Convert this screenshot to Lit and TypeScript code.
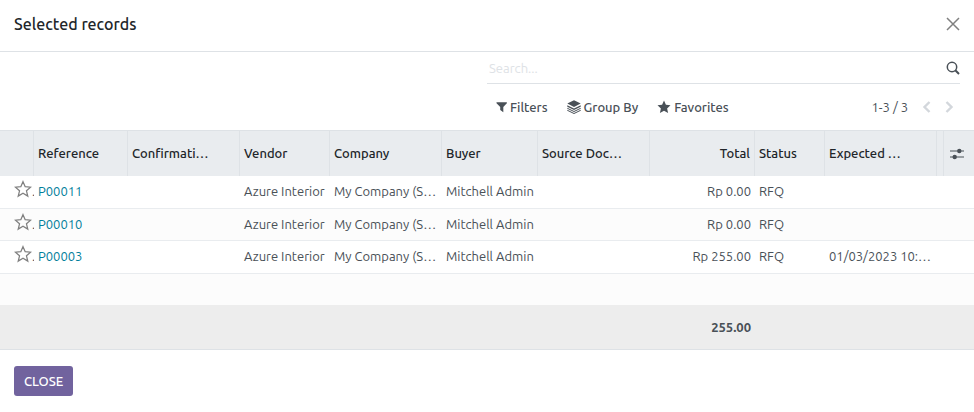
import { LitElement, html, svg, css, nothing } from "lit";
import { customElement, property, state } from "lit/decorators.js";
import { classMap } from "lit/directives/class-map.js";

interface Column {
  key: string;
  label: string;
  cls: string;
  numeric?: boolean;
}

interface Order {
  reference: string;
  vendor: string;
  company: string;
  buyer: string;
  total: string;
  status: string;
  expected: string;
}

const COLUMNS: Column[] = [
  { key: "reference", label: "Reference", cls: "c-ref" },
  { key: "confirmation", label: "Confirmati…", cls: "c-wide" },
  { key: "vendor", label: "Vendor", cls: "c-vendor" },
  { key: "company", label: "Company", cls: "c-wide" },
  { key: "buyer", label: "Buyer", cls: "c-buyer" },
  { key: "source", label: "Source Doc…", cls: "c-wide" },
  { key: "total", label: "Total", cls: "c-total", numeric: true },
  { key: "status", label: "Status", cls: "c-status" },
  { key: "expected", label: "Expected …", cls: "c-wide" },
];

const order = (reference: string, total: string, expected = ""): Order => ({
  reference,
  vendor: "Azure Interior",
  company: "My Company (S…",
  buyer: "Mitchell Admin",
  total,
  status: "RFQ",
  expected,
});

const ORDERS: Order[] = [
  order("P00011", "Rp 0.00"),
  order("P00010", "Rp 0.00"),
  order("P00003", "Rp 255.00", "01/03/2023 10:…"),
];

const ICONS = {
  close: svg`<path d="M1 1 13 13M13 1 1 13" fill="none" stroke="currentColor" stroke-width="1.5"/>`,
  search: svg`<circle cx="6" cy="6" r="4.7" fill="none" stroke="currentColor" stroke-width="1.5"/><path d="M9.300 9.300 13 13" stroke="currentColor" stroke-width="2"/>`,
  filter: svg`<path d="M2.200 1.500h11.200c.6 0 .8.7.4 1.100L9.700 7V13.200L6.100 10.400V7L1.800 2.600c-.4-.4-.2-1.100.4-1.100z"/>`,
  layers: svg`<path d="M7 .2 13.700 3.500 7 6.900 .3 3.500z"/><path d="M.3 5.200 7 8.500l6.700-3.300v1.500L7 10 .3 6.700zM.3 7.700 7 11l6.700-3.300v1L7 12 .3 8.700zM.3 9.700 7 13l6.700-3.300v1L7 14 .3 10.700z"/>`,
  star: svg`<path d="M7 .6 8.900 4.800l4.600.5-3.400 3.100 1 4.700L7 10.800l-4.100 2.300 1-4.700L.5 5.300l4.600-.5z"/>`,
  starOutline: svg`<path d="M7 1.300 8.700 5.200l4.200.4-3.200 2.800 1 4.100L7 10.300l-3.700 2.200 1-4.100L1.100 5.600l4.200-.4z" fill="none" stroke="currentColor" stroke-width="1"/>`,
  prev: svg`<path d="M9.500 2 4.500 7l5 5" fill="none" stroke="currentColor" stroke-width="2.400"/>`,
  next: svg`<path d="M4.500 2l5 5-5 5" fill="none" stroke="currentColor" stroke-width="2.400"/>`,
  sliders: svg`<path d="M0 4h14M0 10h14" stroke="currentColor" stroke-width="1.200"/><circle cx="9.300" cy="4" r="2.200"/><circle cx="4.700" cy="10" r="2.200"/>`,
};

@customElement("ui-icon")
export class UiIcon extends LitElement {
  static styles = css`
    :host { display: inline-flex; width: 14px; height: 14px; flex: none; }
    :host([large]) { width: 18px; height: 18px; }
    :host([small]) { width: 12px; height: 12px; }
    .glyph { display: block; width: 100%; height: 100%; fill: currentColor; }
  `;
  @property() name: keyof typeof ICONS = "star";

  render() {
    return html`<svg class="glyph" viewBox="0 0 14 14" aria-hidden="true">${ICONS[this.name]}</svg>`;
  }
}

@customElement("app-root")
export class AppRoot extends LitElement {
  static styles = css`
    :host {
      display: block;
      min-height: 100vh;
      background: #fff;
      color: #495057;
      font: 13px/20px "Ubuntu", "Noto Sans", sans-serif;
    }
    button {
      font: inherit;
      color: inherit;
      background: none;
      border: 0;
      padding: 0;
      cursor: pointer;
    }
    .header {
      display: flex;
      align-items: center;
      justify-content: space-between;
      box-sizing: border-box;
      height: 52px;
      padding: 0 14px 4px;
      border-bottom: 1px solid #dee2e6;
    }
    .title { margin: 0; font-size: 16px; font-weight: 500; color: #212529; }
    .close-x { display: flex; color: #808080; }
    .panel {
      display: flex;
      flex-direction: column;
      width: 50%;
      box-sizing: border-box;
      margin-left: auto;
      padding-right: 14px;
    }
    .search {
      display: flex;
      align-items: center;
      height: 31px;
      border-bottom: 1px solid #dee2e6;
    }
    .search-input {
      flex: 1;
      min-width: 0;
      border: 0;
      outline: 0;
      padding: 0 2px;
      font: inherit;
      color: inherit;
      background: none;
    }
    .search-input::placeholder { color: #dee2e6; opacity: 1; }
    .search-button { display: flex; }
    .tools {
      display: flex;
      align-items: center;
      justify-content: space-between;
      height: 46px;
      padding: 0 4px 0 8px;
    }
    .group { display: flex; align-items: center; gap: 19px; }
    .tool { display: flex; align-items: center; gap: 3px; font-weight: 500; }
    .pager { display: flex; align-items: center; gap: 8px; }
    .pager-value { margin-right: 4px; }
    .step { display: flex; color: #d3d7dc; }
    .list { width: 100%; table-layout: fixed; border-collapse: separate; border-spacing: 0; }
    .c-fav { width: 34px; }
    .c-ref { width: 94px; }
    .c-wide { width: 112px; }
    .c-vendor { width: 90px; }
    .c-buyer { width: 96px; }
    .c-total { width: 105px; }
    .c-status { width: 70px; }
    .c-gap { width: 7px; }
    .c-opt { width: 30px; }
    th, td {
      box-sizing: border-box;
      padding: 0 4px;
      text-align: left;
      white-space: nowrap;
      overflow: hidden;
    }
    .numeric { text-align: right; }
    .head th, .head td {
      height: 46px;
      padding-bottom: 2px;
      background: #e9ecef;
      color: #212529;
      font-weight: 500;
      border-top: 1px solid #dee2e6;
      border-right: 1px solid #dee2e6;
    }
    .head .options { border-right: 0; padding: 0 6px; }
    .opt-button { display: flex; color: #495057; }
    .row td { height: 33px; padding-bottom: 2px; border-bottom: 1px solid #e9ecef; }
    .row:nth-child(even) td { height: 32px; background: #fcfcfc; }
    .row.empty:nth-child(even) td { height: 31px; border-bottom: 0; }
    .row .fav { padding: 0 0 2px 14px; }
    .fav-box { display: flex; align-items: center; }
    .fav-button { display: flex; color: #808080; padding-bottom: 4px; }
    .link { color: #017e9b; text-decoration: none; }
    .foot td {
      height: 45px;
      background: #ededed;
      border-bottom: 1px solid #dee2e6;
      font-weight: 700;
    }
    .footer { display: flex; padding: 16px 14px; }
    .primary {
      height: 30px;
      padding: 0 10px;
      border-radius: 3px;
      background: #71639e;
      color: #fff;
      font-weight: 500;
    }
  `;

  @state() private favorites = new Set<string>();

  private toggle(ref: string) {
    const next = new Set(this.favorites);
    next.has(ref) ? next.delete(ref) : next.add(ref);
    this.favorites = next;
  }

  private cell(o: Order, c: Column) {
    const value = (o as unknown as Record<string, string>)[c.key];
    return html`<td class=${classMap({ numeric: !!c.numeric })}>
      ${c.key === "reference" ? html`<a class="link" href="#${value}">${value}</a>` : value ?? nothing}
    </td>`;
  }

  render() {
    return html`
      <header class="header">
        <h1 class="title">Selected records</h1>
        <button class="close-x" aria-label="Dismiss"><ui-icon name="close"></ui-icon></button>
      </header>

      <section class="panel">
        <div class="search">
          <input class="search-input" type="text" placeholder="Search..." aria-label="Search" />
          <button class="search-button" aria-label="Run search"><ui-icon name="search"></ui-icon></button>
        </div>
        <div class="tools">
          <div class="group">
            <button class="tool"><ui-icon small name="filter"></ui-icon>Filters</button>
            <button class="tool"><ui-icon name="layers"></ui-icon>Group By</button>
            <button class="tool"><ui-icon name="star"></ui-icon>Favorites</button>
          </div>
          <div class="pager">
            <span class="pager-value">1-3 / 3</span>
            <button class="step" aria-label="Previous"><ui-icon name="prev"></ui-icon></button>
            <button class="step" aria-label="Next"><ui-icon name="next"></ui-icon></button>
          </div>
        </div>
      </section>

      <table class="list">
        <colgroup>
          <col class="c-fav" />
          ${COLUMNS.map((c) => html`<col class=${c.cls} />`)}
          <col class="c-gap" />
          <col class="c-opt" />
        </colgroup>
        <thead>
          <tr class="head">
            <td></td>
            ${COLUMNS.map((c) => html`<th scope="col" class=${classMap({ numeric: !!c.numeric })}>${c.label}</th>`)}
            <td></td>
            <td class="options">
              <button class="opt-button" aria-label="Optional columns"><ui-icon name="sliders"></ui-icon></button>
            </td>
          </tr>
        </thead>
        <tbody>
          ${ORDERS.map(
            (o) => html`<tr class="row">
              <td class="fav">
                <div class="fav-box">
                  <button class="fav-button" aria-label="Priority" aria-pressed=${this.favorites.has(o.reference)}
                    @click=${() => this.toggle(o.reference)}>
                    <ui-icon large name=${this.favorites.has(o.reference) ? "star" : "starOutline"}></ui-icon>
                  </button>.
                </div>
              </td>
              ${COLUMNS.map((c) => this.cell(o, c))}
              <td colspan="2"></td>
            </tr>`
          )}
          <tr class="row empty"><td colspan="12"></td></tr>
        </tbody>
        <tfoot>
          <tr class="foot">
            <td colspan="7"></td>
            <td class="numeric">255.00</td>
            <td colspan="4"></td>
          </tr>
        </tfoot>
      </table>

      <footer class="footer">
        <button class="primary">CLOSE</button>
      </footer>
    `;
  }
}
